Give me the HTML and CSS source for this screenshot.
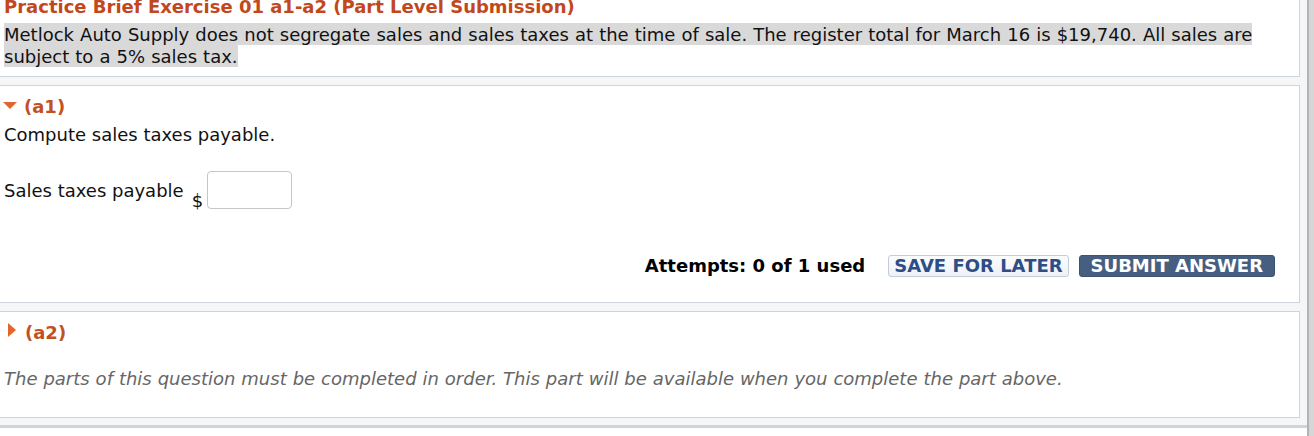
FILE: index.html
```html
<!DOCTYPE html>
<html lang="en">
<head>
<meta charset="utf-8">
<title>Practice Brief Exercise 01 a1-a2</title>
<link rel="stylesheet" href="styles.css">
</head>
<body>
<div class="page">
  <div class="main">
    <div class="stack">
      <section class="box intro">
        <h1 class="title">Practice Brief Exercise 01 a1-a2 (Part Level Submission)</h1>
        <p class="desc"><span class="hl">Metlock Auto Supply does not segregate sales and sales taxes at the time of sale. The register total for March 16 is $19,740. All sales are subject to a 5% sales tax.</span></p>
      </section>
      <section class="box part">
        <h2 class="part-head"><span class="tri-down"></span>(a1)</h2>
        <p class="q">Compute sales taxes payable.</p>
        <div class="answer-row">
          <span class="label">Sales taxes payable</span>
          <span class="cur">$</span>
          <input class="field" type="text" aria-label="Sales taxes payable">
        </div>
        <div class="actions">
          <span class="attempts">Attempts: 0 of 1 used</span>
          <button class="btn btn-save" type="button">SAVE FOR LATER</button>
          <button class="btn btn-submit" type="button">SUBMIT ANSWER</button>
        </div>
      </section>
      <section class="box part">
        <h2 class="part-head"><span class="tri-right"></span>(a2)</h2>
        <p class="note">The parts of this question must be completed in order. This part will be available when you complete the part above.</p>
      </section>
    </div>
  </div>
  <div class="scrollbar"></div>
</div>
</body>
</html>
```

FILE: styles.css
```css
html, body {
  margin: 0;
  padding: 0;
  height: 100%;
}
body {
  font-family: "DejaVu Sans", Verdana, sans-serif;
  font-size: 18px;
  color: #111;
  background: #fff;
  overflow: hidden;
}
.page {
  display: flex;
  height: 436px;
}
.main {
  flex: 1;
  background: #fff;
}
.scrollbar {
  width: 5px;
  border-left: 2px solid #b3b3b3;
  background: #d6d6d6;
}
.stack {
  display: flex;
  flex-direction: column;
  gap: 8px;
  background: #f5f6f8;
  margin-top: -6px;
  padding: 0 7px 7px 0;
  margin-left: -1px;
  border-bottom: 3px solid #cfd3da;
}
.box {
  background: #fff;
  border: 1px solid #cfd4dc;
}
.intro {
  padding: 1px 0 9px 4px;
}
.title {
  margin: 0;
  font-size: 18px;
  line-height: 22px;
  font-weight: bold;
  color: #c2471c;
}
.desc {
  margin: 5px 0 0;
  line-height: 22px;
  padding-right: 10px;
  word-spacing: 0.35px;
}
.hl {
  background: #d9d9d9;
  padding: 0.5px 0;
}
.part {
  padding: 10px 24px 25px 4px;
}
.part-head {
  margin: 0 0 6px;
  font-size: 18px;
  line-height: 22px;
  font-weight: bold;
  color: #c4501f;
  display: flex;
  align-items: flex-start;
}
.tri-down {
  width: 0;
  height: 0;
  border-left: 7px solid transparent;
  border-right: 7px solid transparent;
  border-top: 7px solid #e4652b;
  margin: 6px 7px 0 -1px;
}
.tri-right {
  width: 0;
  height: 0;
  border-top: 7px solid transparent;
  border-bottom: 7px solid transparent;
  border-left: 8px solid #e4652b;
  margin: 1px 9px 0 4px;
}
.q {
  margin: 0;
  line-height: 22px;
}
.answer-row {
  display: flex;
  align-items: flex-end;
  margin-top: 25px;
}
.label {
  align-self: flex-start;
  line-height: 22px;
  padding-top: 9px;
  margin-right: 8px;
}
.cur {
  line-height: 16px;
  margin-right: 4px;
}
.field {
  box-sizing: border-box;
  width: 85px;
  height: 38px;
  border: 1px solid #c6c6c6;
  border-radius: 4px;
  margin: 0;
  padding: 0 6px;
  font: inherit;
  background: #fff;
}
.actions {
  display: flex;
  justify-content: flex-end;
  align-items: center;
  margin-top: 46px;
}
.attempts {
  font-weight: bold;
  line-height: 22px;
  color: #000;
  margin-right: 23px;
}
.btn {
  font-family: "DejaVu Sans", Verdana, sans-serif;
  font-size: 18px;
  font-weight: bold;
  line-height: 20px;
  border-radius: 3px;
  margin: 0;
  cursor: pointer;
}
.btn-save {
  padding: 0 5px;
  color: #2c4d86;
  background: linear-gradient(#fbfcfd, #eef2f6);
  border: 1px solid #c5ccd7;
  margin-right: 10px;
}
.btn-submit {
  padding: 0 11px;
  color: #fff;
  background: #465f80;
  border: 1px solid #3c5374;
}
.note {
  margin: 24px 0 0;
  line-height: 22px;
  font-style: italic;
  color: #666;
  padding-bottom: 2px;
  word-spacing: 0.2px;
}
```
